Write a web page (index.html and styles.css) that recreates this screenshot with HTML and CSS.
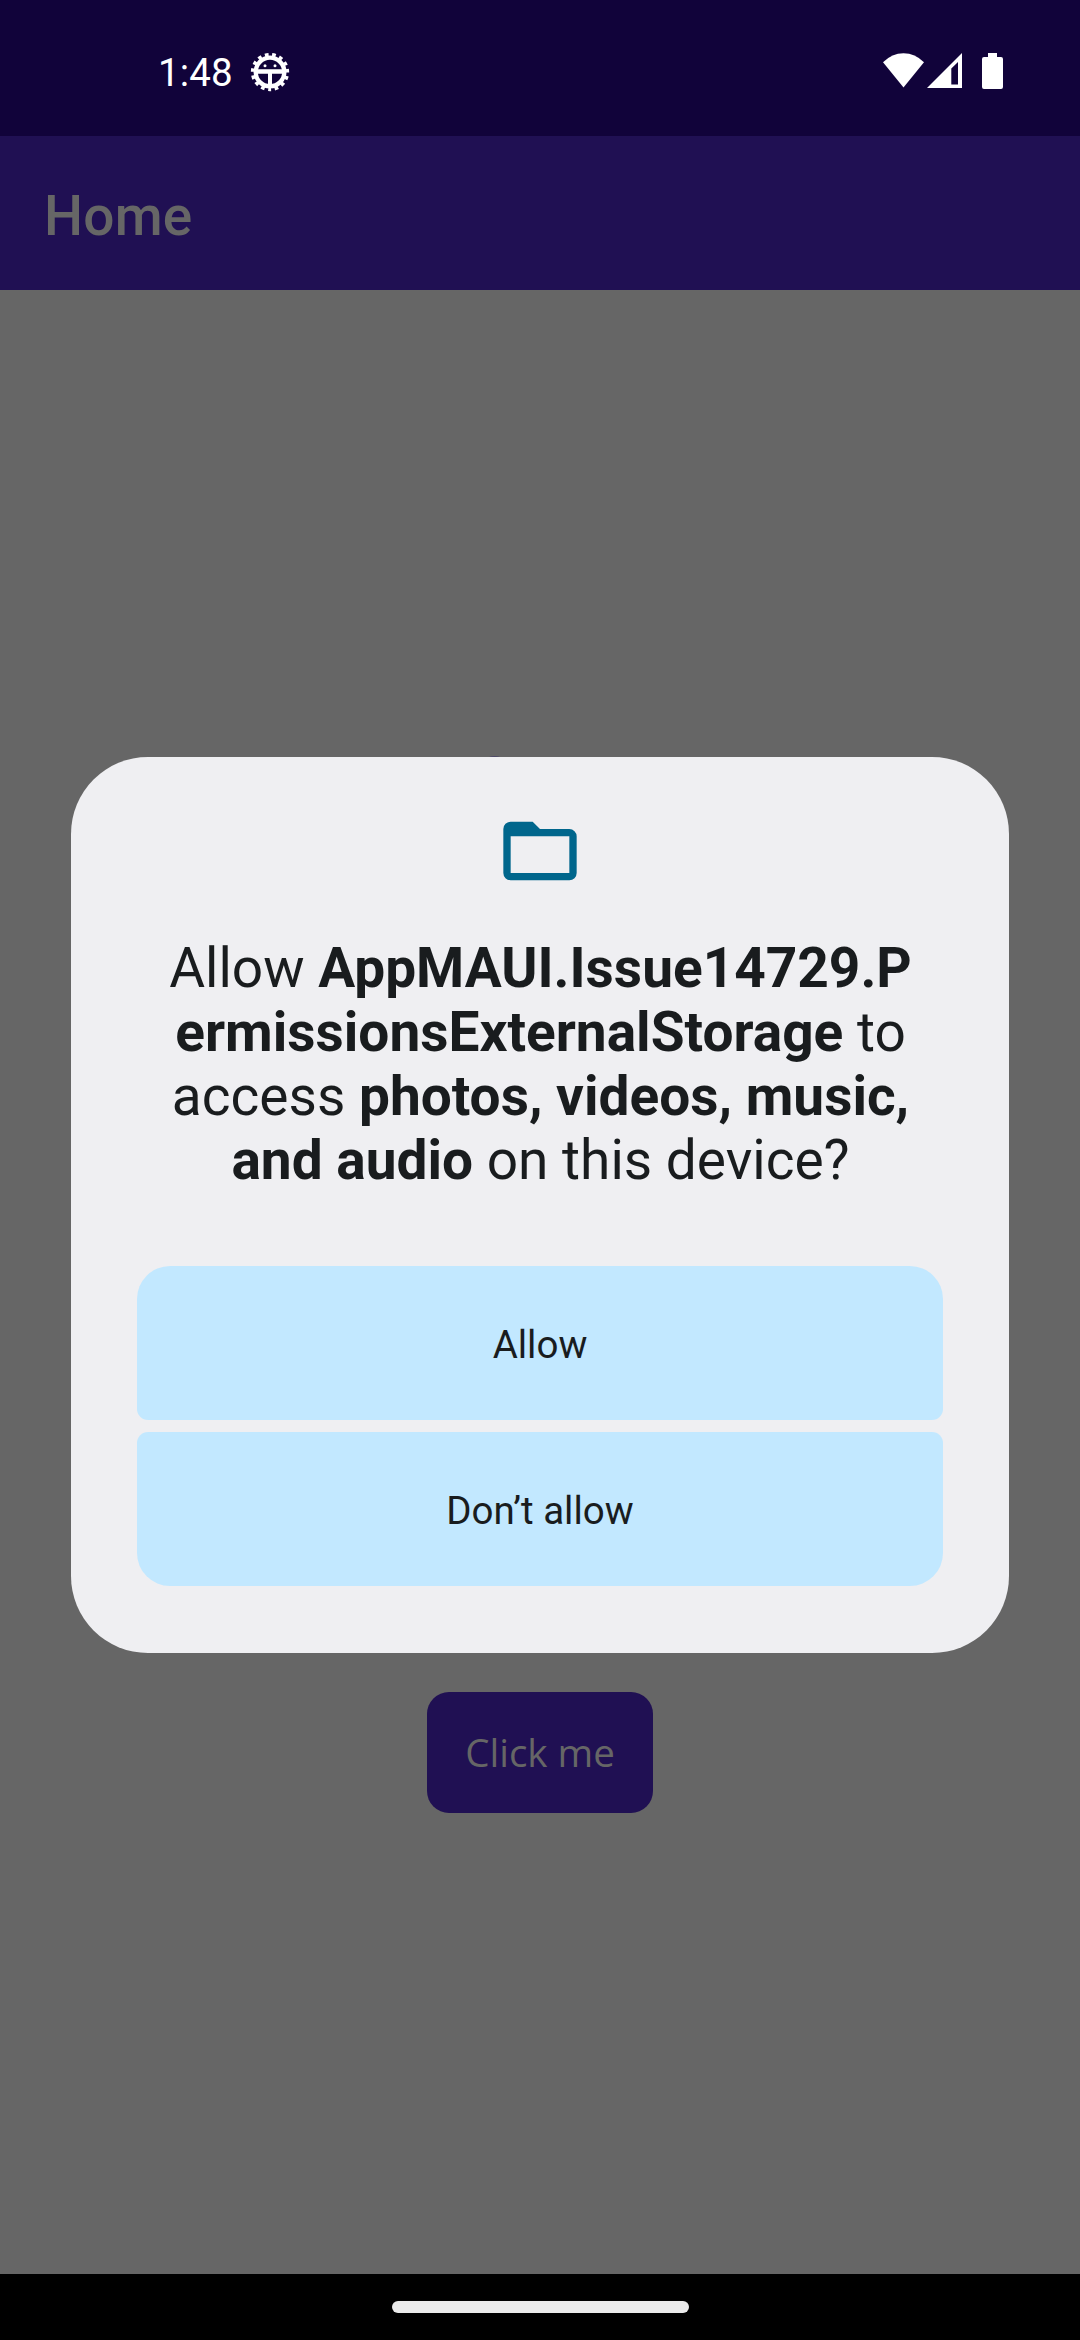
FILE: index.html
```html
<!DOCTYPE html>
<html lang="en">
<head>
<meta charset="utf-8">
<title>Home</title>
<link rel="stylesheet" href="styles.css">
</head>
<body>
<div class="screen">
  <header class="status-bar">
    <div class="status-left">
      <span class="clock">1:48</span>
      <svg class="debug-icon" viewBox="-60 -60 120 120" aria-hidden="true">
        <circle r="43" fill="none" stroke="#fff" stroke-width="13"/>
        <circle r="52" fill="none" stroke="#fff" stroke-width="11" stroke-dasharray="11 10.782" stroke-dashoffset="5.5" transform="rotate(90)"/>
        <path d="M-42-8H42V5H6V42H-6V5H-42Z" fill="#fff"/>
        <circle cx="-15" cy="-19" r="4.5" fill="#fff"/>
        <circle cx="15" cy="-19" r="4.5" fill="#fff"/>
      </svg>
    </div>
    <div class="status-right">
      <svg class="wifi" viewBox="0 0 41 35" aria-hidden="true"><path d="M0 9.3Q9 .3 20.5.3T41 9.3L20.5 34.5Z" fill="#fff"/></svg>
      <svg class="signal" viewBox="0 0 35 35" aria-hidden="true"><path fill-rule="evenodd" d="M0 35L35 0V35ZM24.3 31.4H31V9L24.3 15.5Z" fill="#fff"/></svg>
      <svg class="battery" viewBox="0 0 21 36" aria-hidden="true"><path d="M6 0H15V4H19Q21 4 21 6V34Q21 36 19 36H2Q0 36 0 34V6Q0 4 2 4H6Z" fill="#fff"/></svg>
    </div>
  </header>
  <div class="app-bar"><h1 class="app-title">Home</h1></div>
  <main class="content">
    <button class="click-button">Click me</button>
  </main>
  <footer class="nav-bar"><div class="nav-handle"></div></footer>
  <div class="overlay">
    <div class="hidden-art"></div>
    <section class="dialog" role="dialog">
      <svg class="folder" viewBox="0 0 24 24" aria-hidden="true"><path d="M4 20Q3.175 20 2.588 19.413 2 18.825 2 18V6Q2 5.175 2.588 4.588 3.175 4 4 4H10L12 6H20Q20.825 6 21.413 6.588 22 7.175 22 8V18Q22 18.825 21.413 19.413 20.825 20 20 20ZM4 8V18H20V8Z" fill="#00668c"/></svg>
      <h2 class="message">Allow <b>AppMAUI.Issue14729.P<br>ermissionsExternalStorage</b> to<br>access <b>photos, videos, music,<br>and audio</b> on this device?</h2>
      <div class="actions">
        <button class="action action-first">Allow</button>
        <button class="action action-last">Don’t allow</button>
      </div>
    </section>
  </div>
</div>
</body>
</html>
```
FILE: styles.css
```css
* { box-sizing: border-box; }
body { margin: 0; font-family: Roboto, "Liberation Sans", sans-serif; }
button { border: 0; padding: 0; font: inherit; }
.screen { position: relative; display: flex; flex-direction: column; width: 1080px; height: 2340px; background: #666; overflow: hidden; }
.status-bar { display: flex; justify-content: space-between; height: 136px; padding: 0 77px 0 158px; background: #11033a; color: #fff; }
.status-left { display: flex; align-items: center; gap: 17px; height: 143px; }
.clock { font-size: 38.5px; line-height: 46px; padding-top: 2px; letter-spacing: 0.1px; }
.debug-icon { width: 40px; height: 40px; }
.status-right { display: flex; align-items: flex-start; padding-top: 53px; }
.wifi { width: 41px; height: 35px; }
.signal { width: 35px; height: 35px; margin-left: 3px; }
.battery { width: 21px; height: 36px; margin-left: 20px; }
.app-bar { display: flex; align-items: center; height: 154px; padding: 6px 44px 0; background: #201053; }
.app-title { margin: 0; font-size: 55px; font-weight: 500; line-height: 64px; letter-spacing: 0.2px; color: #666; }
.content { flex: 1; display: flex; flex-direction: column; align-items: center; justify-content: flex-end; padding-bottom: 461px; }
.click-button { width: 226px; height: 121px; padding-bottom: 2px; border-radius: 22px; background: #201053; color: #666; font-family: "Open Sans", sans-serif; font-size: 38.5px; }
.nav-bar { display: flex; justify-content: center; height: 66px; padding-top: 27px; background: #000; }
.nav-handle { width: 297px; height: 12px; border-radius: 6px; background: #ebebeb; }
.overlay { position: absolute; inset: 0; display: flex; align-items: flex-start; justify-content: center; padding-top: 757px; }
/* Top edge of the page artwork that shows above the dialog */
.hidden-art { position: absolute; left: 486px; top: 756px; width: 17px; height: 8px; border-radius: 50% 50% 0 0; background: #4f4a68; }
.dialog { position: relative; display: flex; flex-direction: column; align-items: center; width: 938px; height: 896px; padding: 50px 66px 67px; border-radius: 77px; background: #efeff2; color: #191c1e; }
.folder { width: 88px; height: 88px; }
.message { margin: 41px 0 0; padding-left: 1px; font-size: 55px; font-weight: 400; line-height: 64px; text-align: center; white-space: nowrap; }
.message b { font-weight: 700; }
.actions { display: flex; flex-direction: column; gap: 12px; width: 806px; margin-top: auto; }
.action { height: 154px; padding-top: 2px; background: #c2e8ff; color: #191c1e; font-size: 38.5px; }
.action-first { border-radius: 33px 33px 11px 11px; }
.action-last { border-radius: 11px 11px 33px 33px; }
```
